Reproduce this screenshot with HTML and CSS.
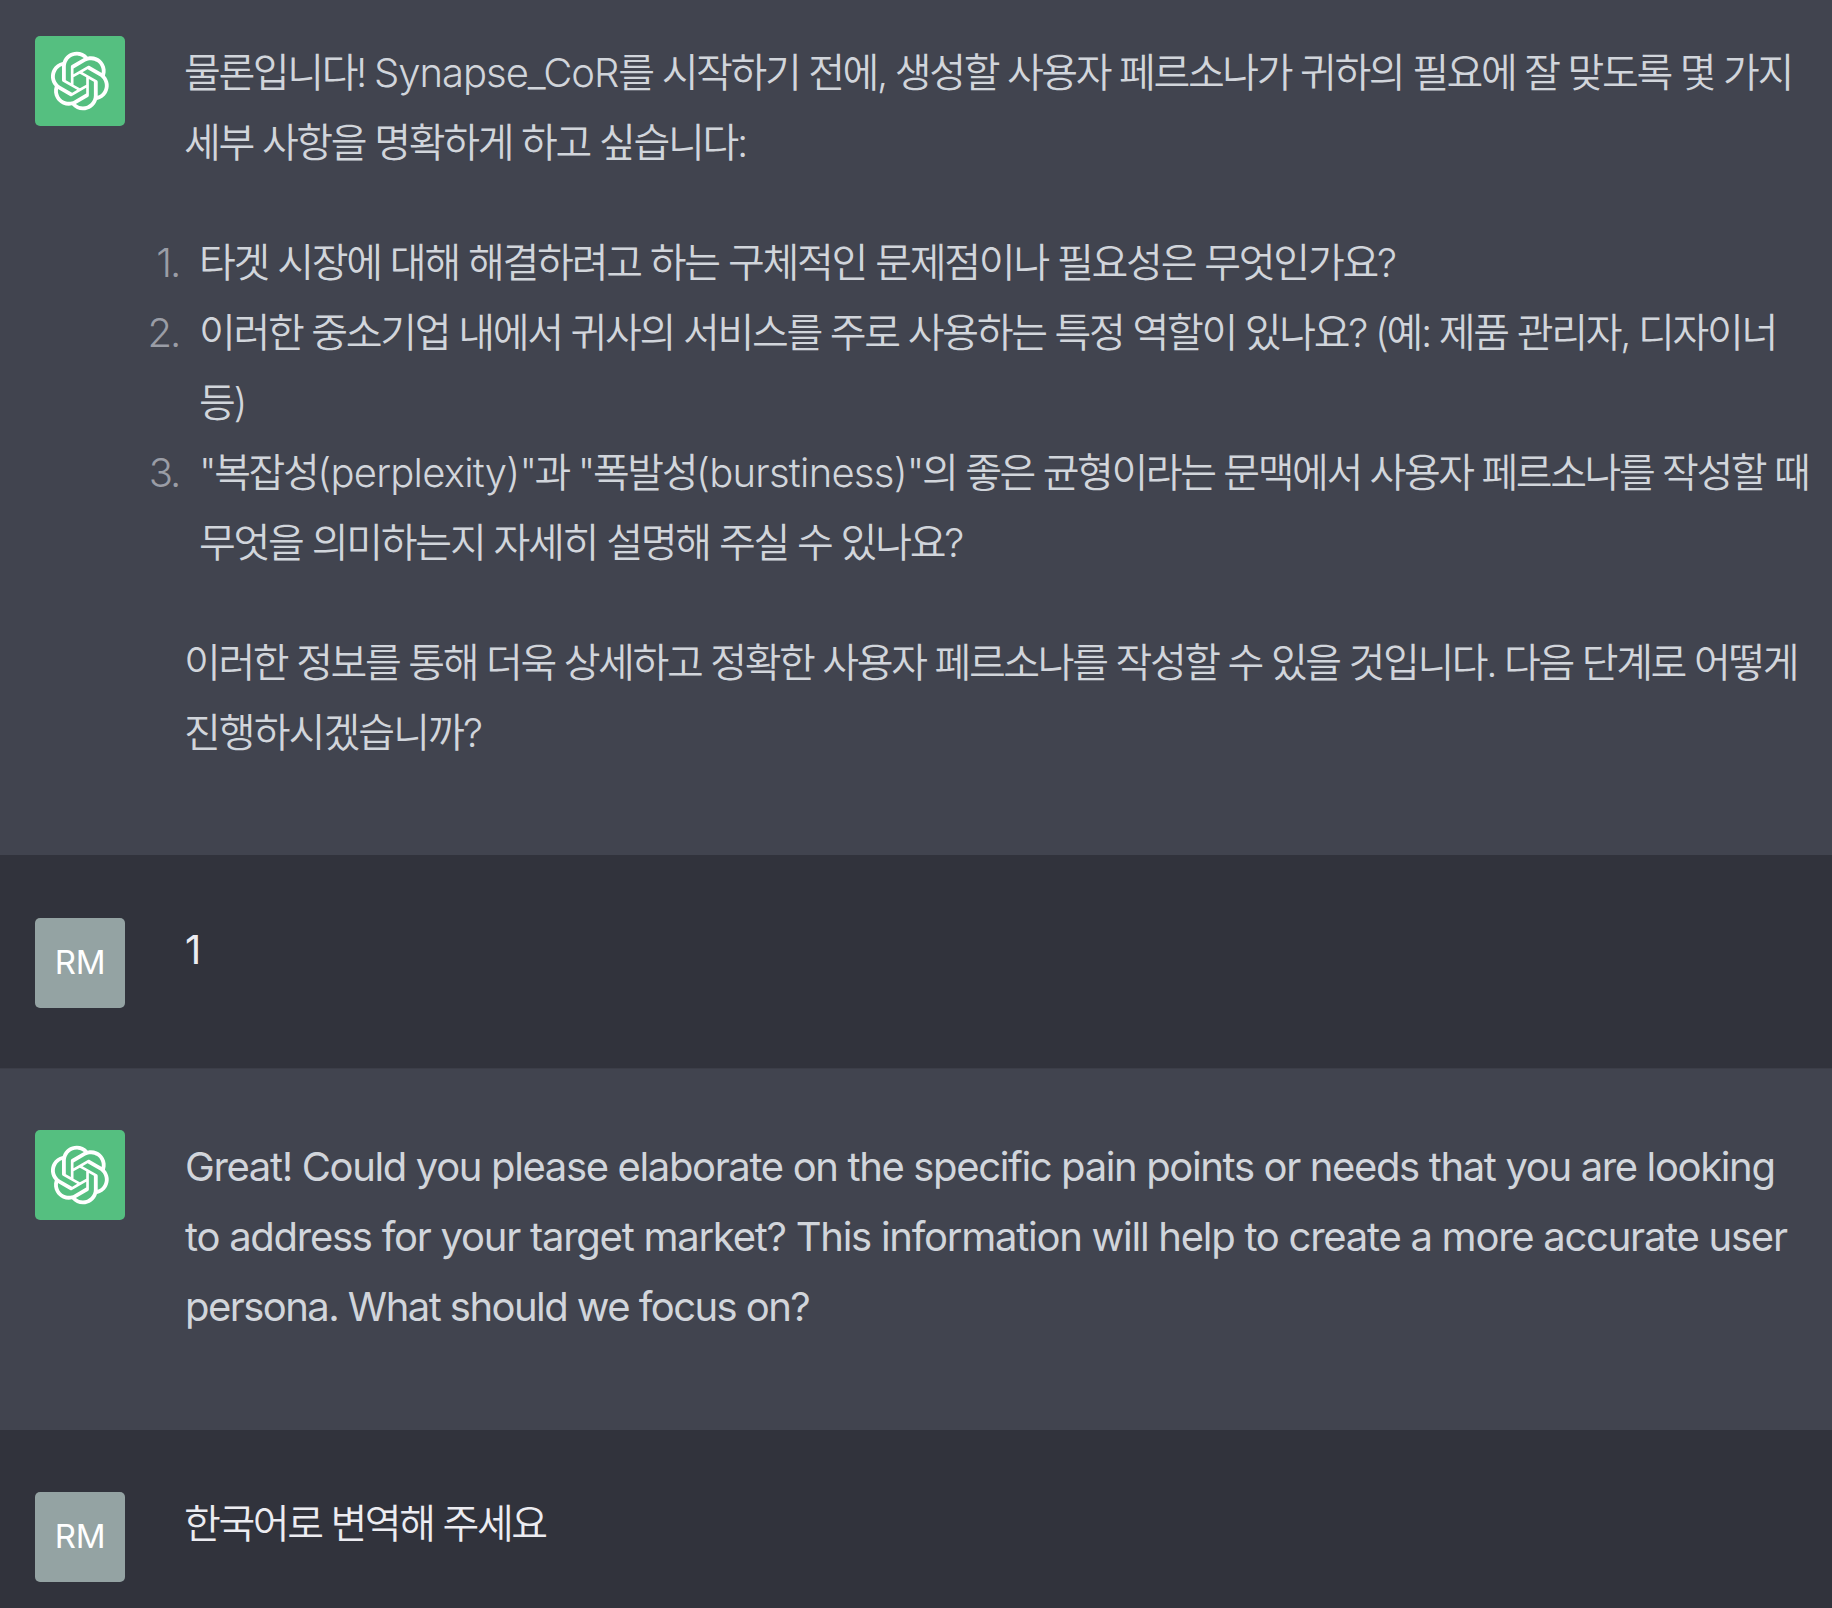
FILE: index.html
```html
<!DOCTYPE html>
<html lang="ko">
<head>
<meta charset="utf-8">
<title>Chat</title>
<link rel="stylesheet" href="styles.css">
</head>
<body>
<svg class="defs" width="0" height="0"><defs><symbol id="logo" viewBox="0 0 41 41"><path fill="currentColor" d="M37.5324 16.8707C37.9808 15.5241 38.1363 14.0974 37.9886 12.6859C37.8409 11.2744 37.3934 9.91076 36.676 8.68622C35.6126 6.83404 33.9882 5.3676 32.0373 4.4985C30.0864 3.62941 27.9098 3.40259 25.8215 3.85078C24.8796 2.7893 23.7219 1.94125 22.4257 1.36341C21.1295 0.785575 19.7249 0.491269 18.3058 0.500197C16.1708 0.495044 14.0893 1.16803 12.3614 2.42214C10.6335 3.67624 9.34853 5.44666 8.6917 7.47815C7.30085 7.76286 5.98686 8.3414 4.8377 9.17505C3.68854 10.0087 2.73073 11.0782 2.02839 12.312C0.956464 14.1591 0.498905 16.2988 0.721698 18.4228C0.944492 20.5467 1.83612 22.5449 3.268 24.1293C2.81966 25.4759 2.66413 26.9026 2.81182 28.3141C2.95951 29.7256 3.40701 31.0892 4.12437 32.3138C5.18791 34.1659 6.8123 35.6322 8.76321 36.5013C10.7141 37.3704 12.8907 37.5973 14.9789 37.1492C15.9208 38.2107 17.0786 39.0587 18.3747 39.6366C19.6709 40.2144 21.0755 40.5087 22.4946 40.4998C24.6307 40.5054 26.7133 39.8321 28.4418 38.5772C30.1704 37.3223 31.4556 35.5506 32.1119 33.5179C33.5027 33.2332 34.8167 32.6547 35.9659 31.821C37.115 30.9874 38.0728 29.9178 38.7752 28.684C39.8458 26.8371 40.3023 24.6979 40.0789 22.5748C39.8556 20.4517 38.9639 18.4544 37.5324 16.8707ZM22.4978 37.8849C20.7443 37.8874 19.0459 37.2733 17.6994 36.1501C17.7601 36.117 17.8666 36.0586 17.936 36.0161L25.9004 31.4156C26.1003 31.3019 26.2663 31.137 26.3813 30.9378C26.4964 30.7386 26.5563 30.5124 26.5549 30.2825V19.0542L29.9213 20.998C29.9389 21.0068 29.9541 21.0198 29.9656 21.0359C29.977 21.052 29.9842 21.0707 29.9867 21.0902V30.3889C29.9842 32.375 29.1946 34.2791 27.7909 35.6841C26.3872 37.0892 24.4838 37.8806 22.4978 37.8849ZM6.39227 31.0064C5.51397 29.4888 5.19742 27.7107 5.49804 25.9832C5.55718 26.0187 5.66048 26.0818 5.73461 26.1244L13.699 30.7248C13.8975 30.8408 14.1233 30.902 14.3532 30.902C14.583 30.902 14.8088 30.8408 15.0073 30.7248L24.731 25.1103V28.9979C24.7321 29.0177 24.7283 29.0376 24.7199 29.0556C24.7115 29.0736 24.6988 29.0893 24.6829 29.1012L16.6317 33.7497C14.9096 34.7416 12.8643 35.0097 10.9447 34.4954C9.02506 33.9811 7.38785 32.7263 6.39227 31.0064ZM4.29707 13.6194C5.17156 12.0998 6.55279 10.9364 8.19885 10.3327C8.19885 10.4013 8.19491 10.5228 8.19491 10.6071V19.808C8.19351 20.0378 8.25334 20.2638 8.36823 20.4629C8.48312 20.6619 8.64893 20.8267 8.84863 20.9404L18.5723 26.5542L15.206 28.4979C15.1894 28.5089 15.1703 28.5155 15.1505 28.5173C15.1307 28.5191 15.1107 28.516 15.0924 28.5082L7.04046 23.8557C5.32135 22.8601 4.06716 21.2235 3.55289 19.3046C3.03862 17.3858 3.30624 15.3413 4.29707 13.6194ZM31.955 20.0556L22.2312 14.4411L25.5976 12.4981C25.6142 12.4872 25.6333 12.4805 25.6531 12.4787C25.6729 12.4769 25.6928 12.4801 25.7111 12.4879L33.7631 17.1364C34.9967 17.849 36.0017 18.8982 36.6606 20.1613C37.3194 21.4244 37.6047 22.849 37.4832 24.2684C37.3617 25.6878 36.8382 27.0432 35.9743 28.1759C35.1103 29.3086 33.9415 30.1717 32.6047 30.6641C32.6047 30.5947 32.6047 30.4733 32.6047 30.3889V21.188C32.6066 20.9586 32.5474 20.7328 32.4332 20.5338C32.319 20.3348 32.1537 20.1698 31.955 20.0556ZM35.3055 15.0128C35.2464 14.9765 35.1431 14.9142 35.069 14.8717L27.1045 10.2712C26.906 10.1554 26.6803 10.0943 26.4504 10.0943C26.2206 10.0943 25.9948 10.1554 25.7963 10.2712L16.0726 15.8858V11.9982C16.0715 11.9783 16.0753 11.9585 16.0837 11.9405C16.0921 11.9225 16.1048 11.9068 16.1207 11.8949L24.1719 7.25025C25.4053 6.53903 26.8158 6.19376 28.2383 6.25482C29.6608 6.31589 31.0364 6.78077 32.2044 7.59508C33.3723 8.40939 34.2842 9.53945 34.8334 10.8531C35.3826 12.1667 35.5464 13.6095 35.3055 15.0128ZM14.2424 21.9419L10.8752 19.9981C10.8576 19.9893 10.8423 19.9763 10.8309 19.9602C10.8195 19.9441 10.8122 19.9254 10.8098 19.9058V10.6071C10.8107 9.18295 11.2173 7.78848 11.9819 6.58696C12.7466 5.38544 13.8377 4.42659 15.1275 3.82264C16.4173 3.21869 17.8524 2.99464 19.2649 3.1767C20.6775 3.35876 22.0089 3.93941 23.1034 4.85067C23.0427 4.88379 22.937 4.94215 22.8668 4.98473L14.9024 9.58517C14.7025 9.69878 14.5366 9.86356 14.4215 10.0626C14.3065 10.2616 14.2466 10.4877 14.2479 10.7175L14.2424 21.9419ZM16.071 17.9991L20.4018 15.4978L24.7325 17.9975V22.9985L20.4018 25.4983L16.071 22.9985V17.9991Z"/></symbol></defs></svg>
<main class="chat">
  <section class="row row-ai row-first">
    <div class="avatar avatar-ai"><svg class="logo"><use href="#logo"/></svg></div>
    <div class="message message-ko">
      <p><span class="fit-a">물론입니다! <span class="latin">Synapse_CoR</span>를 시작하기 전에, 생성할 사용자 페르소나가 귀하의 필요에 잘 맞도록 몇 가지</span><br><span class="fit-b">세부 사항을 명확하게 하고 싶습니다:</span></p>
      <ol>
        <li><span class="fit-c">타겟 시장에 대해 해결하려고 하는 구체적인 문제점이나 필요성은 무엇인가요?</span></li>
        <li><span class="fit-b">이러한 중소기업 내에서 귀사의 서비스를 주로 사용하는 특정 역할이 있나요? (예: 제품 관리자, 디자이너</span><br>등)</li>
        <li><span class="fit-f">"복잡성<span class="latin">(perplexity)</span>"과 "폭발성<span class="latin">(burstiness)</span>"의 좋은 균형이라는 문맥에서 사용자 페르소나를 작성할 때</span><br><span class="fit-c">무엇을 의미하는지 자세히 설명해 주실 수 있나요?</span></li>
      </ol>
      <p><span class="fit-d">이러한 정보를 통해 더욱 상세하고 정확한 사용자 페르소나를 작성할 수 있을 것입니다. 다음 단계로 어떻게</span><br><span class="fit-e">진행하시겠습니까?</span></p>
    </div>
  </section>
  <section class="row row-user row-one">
    <div class="avatar avatar-user">RM</div>
    <div class="message message-user"><p>1</p></div>
  </section>
  <section class="row row-ai row-third">
    <div class="avatar avatar-ai"><svg class="logo"><use href="#logo"/></svg></div>
    <div class="message message-en">
      <p><span class="en-a">Great! Could you please elaborate on the specific pain points or needs that you are looking</span><br><span class="en-b">to address for your target market? This information will help to create a more accurate user</span><br>persona. What should we focus on?</p>
    </div>
  </section>
  <section class="row row-user row-last">
    <div class="avatar avatar-user">RM</div>
    <div class="message message-user message-ko-user"><p>한국어로 변역해 주세요</p></div>
  </section>
</main>
</body>
</html>
```
FILE: styles.css
```css
html, body { margin: 0; padding: 0; background: #31333c; }
.defs { position: absolute; }
.chat {
  width: 1832px;
  height: 1608px;
  overflow: hidden;
  font-family: Inter, "Noto Sans CJK KR", sans-serif;
  font-size: 40px;
  line-height: 70px;
  font-weight: 400;
}
.row {
  display: flex;
  align-items: flex-start;
  gap: 60px;
  padding-left: 35px;
  box-sizing: border-box;
  white-space: nowrap;
}
.row-ai { background: #41444f; color: #d1d5db; }
.row-user { background: #31333c; color: #ececf1; border-bottom: 1px solid #3c3e48; }
.row-first { height: 855px; padding-top: 36px; }
.row-one { height: 214px; padding-top: 63px; }
.row-third { height: 361px; padding-top: 61px; }
.row-last { height: 178px; padding-top: 62px; border-bottom: 0; }
.avatar {
  width: 90px;
  height: 90px;
  flex: none;
  border-radius: 5px;
  display: flex;
  align-items: center;
  justify-content: center;
  color: #fff;
  font-weight: 400;
}
.avatar-ai { background: #55bf80; }
.avatar-user { background: #94a3a3; font-size: 33px; line-height: 1; letter-spacing: -0.3px; padding-bottom: 2px; box-sizing: border-box; }
.logo { width: 60px; height: 60px; }
.message { padding-top: 2px; }
.message p { margin: 0; }
.message ol { margin: 50px 0; padding: 0 0 0 15px; list-style: none; counter-reset: step; }
.message li { position: relative; counter-increment: step; }
.message li::before {
  content: counter(step) ".";
  position: absolute;
  right: 100%;
  margin-right: 20px;
  color: #9a9da6;
  letter-spacing: -2.2px;
}
.message-ko { letter-spacing: -2.2px; margin-left: -1px; font-weight: 350; }
.latin { font-weight: 350; }
.fit-a { letter-spacing: -2.38px; }
.fit-b { letter-spacing: -2.32px; }
.fit-c { letter-spacing: -2.24px; }
.fit-d { letter-spacing: -2.38px; }
.fit-e { letter-spacing: -1.94px; }
.fit-f { letter-spacing: -2.44px; }
.fit-a .latin { letter-spacing: -1px; }
.fit-f .latin { letter-spacing: -0.75px; }
.message-en { letter-spacing: -1.56px; }
.en-a { letter-spacing: -1.36px; }
.en-b { letter-spacing: -1.26px; }
.message-user { line-height: 64px; padding-top: 0; }
.message-ko-user { letter-spacing: -2.4px; margin-left: -1px; font-weight: 350; }
```
